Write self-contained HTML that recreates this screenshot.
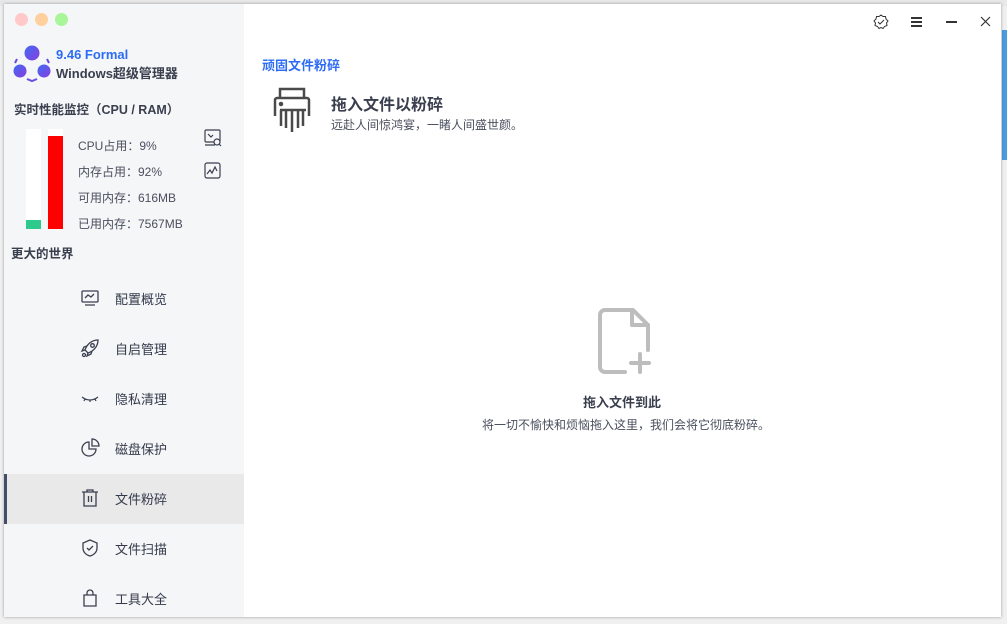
<!DOCTYPE html>
<html><head><meta charset="utf-8"><style>
*{margin:0;padding:0;box-sizing:border-box}
body{width:1007px;height:622px;overflow:hidden;background:#f0f0f0;font-family:"Liberation Sans","Noto Sans CJK SC",sans-serif;position:relative}
.bgtop{position:absolute;left:0;top:0;width:1007px;height:6px;background:#e8e8e8}
.blue{position:absolute;left:1002px;top:30px;width:5px;height:130px;background:#4a9be0}
.win{position:absolute;left:4px;top:4px;width:997px;height:613px;background:#fff;box-shadow:0 0 3px rgba(0,0,0,.35)}
.side{position:absolute;left:0;top:0;width:240px;height:613px;background:#f5f6f8}
.dot{position:absolute;top:9px;width:13px;height:13px;border-radius:50%}
.t{position:absolute;white-space:nowrap}
.nav{position:absolute;left:0;width:240px;height:50px}
.nav svg{position:absolute;left:76px;top:14px}
.nav span{position:absolute;left:111px;top:15px;font-size:13px;color:#333a4a}
</style></head><body>
<div class="bgtop"></div><div class="blue"></div>
<div class="win">
<div class="side">
 <div class="dot" style="left:11px;background:#ffc9c9"></div>
 <div class="dot" style="left:31px;background:#ffcf9e"></div>
 <div class="dot" style="left:51px;background:#a8f59a"></div>
 <svg style="position:absolute;left:9px;top:41px" width="38" height="38" viewBox="0 0 38 38">
  <defs><linearGradient id="g" x1="0" y1="0" x2="1" y2="1"><stop offset="0" stop-color="#3d6cf2"/><stop offset="1" stop-color="#8a3de0"/></linearGradient></defs>
  <circle cx="19" cy="8" r="7.5" fill="url(#g)"/><circle cx="7" cy="26" r="6.5" fill="url(#g)"/><circle cx="31" cy="26" r="6.5" fill="url(#g)"/>
  <path d="M4 14 L2 18 M34 14 L36 18 M14 34 L19 36 L24 34" stroke="#6a4be8" stroke-width="2" fill="none"/>
 </svg>
 <div class="t" style="left:52px;top:43px;font-size:13px;font-weight:bold;color:#2d6cf5">9.46 Formal</div>
 <div class="t" style="left:52px;top:59px;font-size:13px;font-weight:bold;color:#3a3f4e">Windows超级管理器</div>
 <div class="t" style="left:10px;top:95px;font-size:12.5px;font-weight:bold;color:#3a3f4e">实时性能监控（CPU / RAM）</div>
 <div style="position:absolute;left:22px;top:125px;width:15px;height:100px;background:#fff"></div>
 <div style="position:absolute;left:22px;top:216px;width:15px;height:9px;background:#2ec98c"></div>
 <div style="position:absolute;left:44px;top:125px;width:15px;height:100px;background:#fff"></div>
 <div style="position:absolute;left:44px;top:132px;width:15px;height:93px;background:#f00"></div>
 <div class="t" style="left:74px;top:133px;font-size:12px;color:#4a4f5e">CPU占用：9%</div>
 <div class="t" style="left:74px;top:159px;font-size:12px;color:#4a4f5e">内存占用：92%</div>
 <div class="t" style="left:74px;top:185px;font-size:12px;color:#4a4f5e">可用内存：616MB</div>
 <div class="t" style="left:74px;top:211px;font-size:12px;color:#4a4f5e">已用内存：7567MB</div>
 <svg style="position:absolute;left:200px;top:125px" width="18" height="18" viewBox="0 0 18 18" fill="none" stroke="#3a3f4e" stroke-width="1.2"><rect x="1" y="1" width="15" height="12" rx="1"/><path d="M1 16h10M4 5l3 3 2-2"/><circle cx="13" cy="13" r="3" fill="#f5f6f8"/><path d="M15 15l2 2"/></svg>
 <svg style="position:absolute;left:200px;top:158px" width="18" height="18" viewBox="0 0 18 18" fill="none" stroke="#3a3f4e" stroke-width="1.2"><rect x="1" y="1" width="15" height="15" rx="2"/><path d="M3 12l3-4 2 3 3-6 2 4"/></svg>
 <div class="t" style="left:7px;top:239px;font-size:12.5px;font-weight:bold;color:#3a3f4e">更大的世界</div>

 <div class="nav" style="top:270px"><svg width="20" height="20" viewBox="0 0 20 20" fill="none" stroke="#3a3f4e" stroke-width="1.3"><rect x="2" y="3" width="16" height="11" rx="1"/><path d="M5 17h10M5 10l3-3 3 2 3-3"/></svg><span>配置概览</span></div>
 <div class="nav" style="top:320px"><svg width="20" height="20" viewBox="0 0 20 20" fill="none" stroke="#3a3f4e" stroke-width="1.3"><path d="M18 2C12 2 7 6 5 12l3 3c6-2 10-7 10-13z"/><circle cx="12.5" cy="7.5" r="1.8"/><path d="M5 12l-3 1 2-4 3-1M8 15l-1 3 4-2 1-3"/><circle cx="4" cy="17" r="1.5"/></svg><span>自启管理</span></div>
 <div class="nav" style="top:370px"><svg width="20" height="20" viewBox="0 0 20 20" fill="none" stroke="#3a3f4e" stroke-width="1.2"><path d="M2 9c5 4 11 4 16 0M5 11l-1 2M10 12v2M15 11l1 2"/></svg><span>隐私清理</span></div>
 <div class="nav" style="top:420px"><svg width="20" height="20" viewBox="0 0 20 20" fill="none" stroke="#3a3f4e" stroke-width="1.3"><path d="M9 4a7 7 0 1 0 7 7H9z"/><path d="M12 1v7h7a7 7 0 0 0-7-7z"/></svg><span>磁盘保护</span></div>
 <div class="nav" style="top:470px;background:#e9e9ea"><div style="position:absolute;left:0;top:0;width:3px;height:50px;background:#464d68"></div><svg width="20" height="20" viewBox="0 0 20 20" fill="none" stroke="#3a3f4e" stroke-width="1.3"><path d="M2 4h16M7 4V2h6v2M4 4v14h12V4M8.5 8v6M11.5 8v6"/></svg><span>文件粉碎</span></div>
 <div class="nav" style="top:520px"><svg width="20" height="20" viewBox="0 0 20 20" fill="none" stroke="#3a3f4e" stroke-width="1.3"><path d="M10 2l7 3v5c0 4-3 7-7 8-4-1-7-4-7-8V5z"/><path d="M7 10l2 2 4-4"/></svg><span>文件扫描</span></div>
 <div class="nav" style="top:570px"><svg width="20" height="20" viewBox="0 0 20 20" fill="none" stroke="#3a3f4e" stroke-width="1.3"><path d="M4 7h12v11H4zM7 7V5a3 3 0 0 1 6 0v2"/></svg><span>工具大全</span></div>
</div>

<svg style="position:absolute;left:869px;top:10px" width="16" height="16" viewBox="0 0 16 16" fill="none" stroke="#333" stroke-width="1"><path d="M8 1l2 1.5 2.5 0 .5 2.5 2 2-1.5 2 .5 2.5-2.5 1-1.5 2-2-1-2 1-1.5-2-2.5-1 .5-2.5L1 7l2-2 .5-2.5 2.5 0z"/><path d="M5 8l2 2 4-4"/></svg>
<div style="position:absolute;left:907px;top:13px;width:11px;height:1.5px;background:#333;box-shadow:0 4px 0 #333,0 8px 0 #333"></div>
<div style="position:absolute;left:942px;top:17px;width:11px;height:1.5px;background:#333"></div>
<svg style="position:absolute;left:976px;top:12px" width="11" height="11" viewBox="0 0 11 11" stroke="#333" stroke-width="1.2"><path d="M1 1l9 9M10 1l-9 9"/></svg>

<div class="t" style="left:258px;top:51px;font-size:13px;font-weight:bold;color:#2d6cf5">顽固文件粉碎</div>
<svg style="position:absolute;left:266px;top:82px" width="46" height="46" viewBox="0 0 46 46" fill="none" stroke="#4a4a4a" stroke-width="2.5"><path d="M10 12V3h24v9"/><path d="M5 30V14a2 2 0 0 1 2-2h30a2 2 0 0 1 2 2v16"/><path d="M10 24h26M11 24v16M16 24v18M22 24v22M28 24v18M33 24v16"/><circle cx="11" cy="18" r="1" fill="#4a4a4a"/></svg>
<div class="t" style="left:327px;top:87px;font-size:16px;font-weight:bold;color:#3a3f4e">拖入文件以粉碎</div>
<div class="t" style="left:327px;top:112px;font-size:12px;color:#4a4f5e">远赴人间惊鸿宴，一睹人间盛世颜。</div>

<svg style="position:absolute;left:593px;top:303px" width="56" height="68" viewBox="0 0 56 68" fill="none" stroke="#bdbdbd" stroke-width="4" stroke-linecap="round" stroke-linejoin="round"><path d="M28 65H8a5 5 0 0 1-5-5V8a5 5 0 0 1 5-5h28l15 15v25"/><path d="M35 3v15h16"/><path d="M43 47v18M34 56h18"/></svg>
<div class="t" style="left:579px;top:388px;font-size:13px;font-weight:bold;color:#3a3f4e">拖入文件到此</div>
<div class="t" style="left:478px;top:412px;font-size:12px;color:#4a4f5e">将一切不愉快和烦恼拖入这里，我们会将它彻底粉碎。</div>
</div>
</body></html>
